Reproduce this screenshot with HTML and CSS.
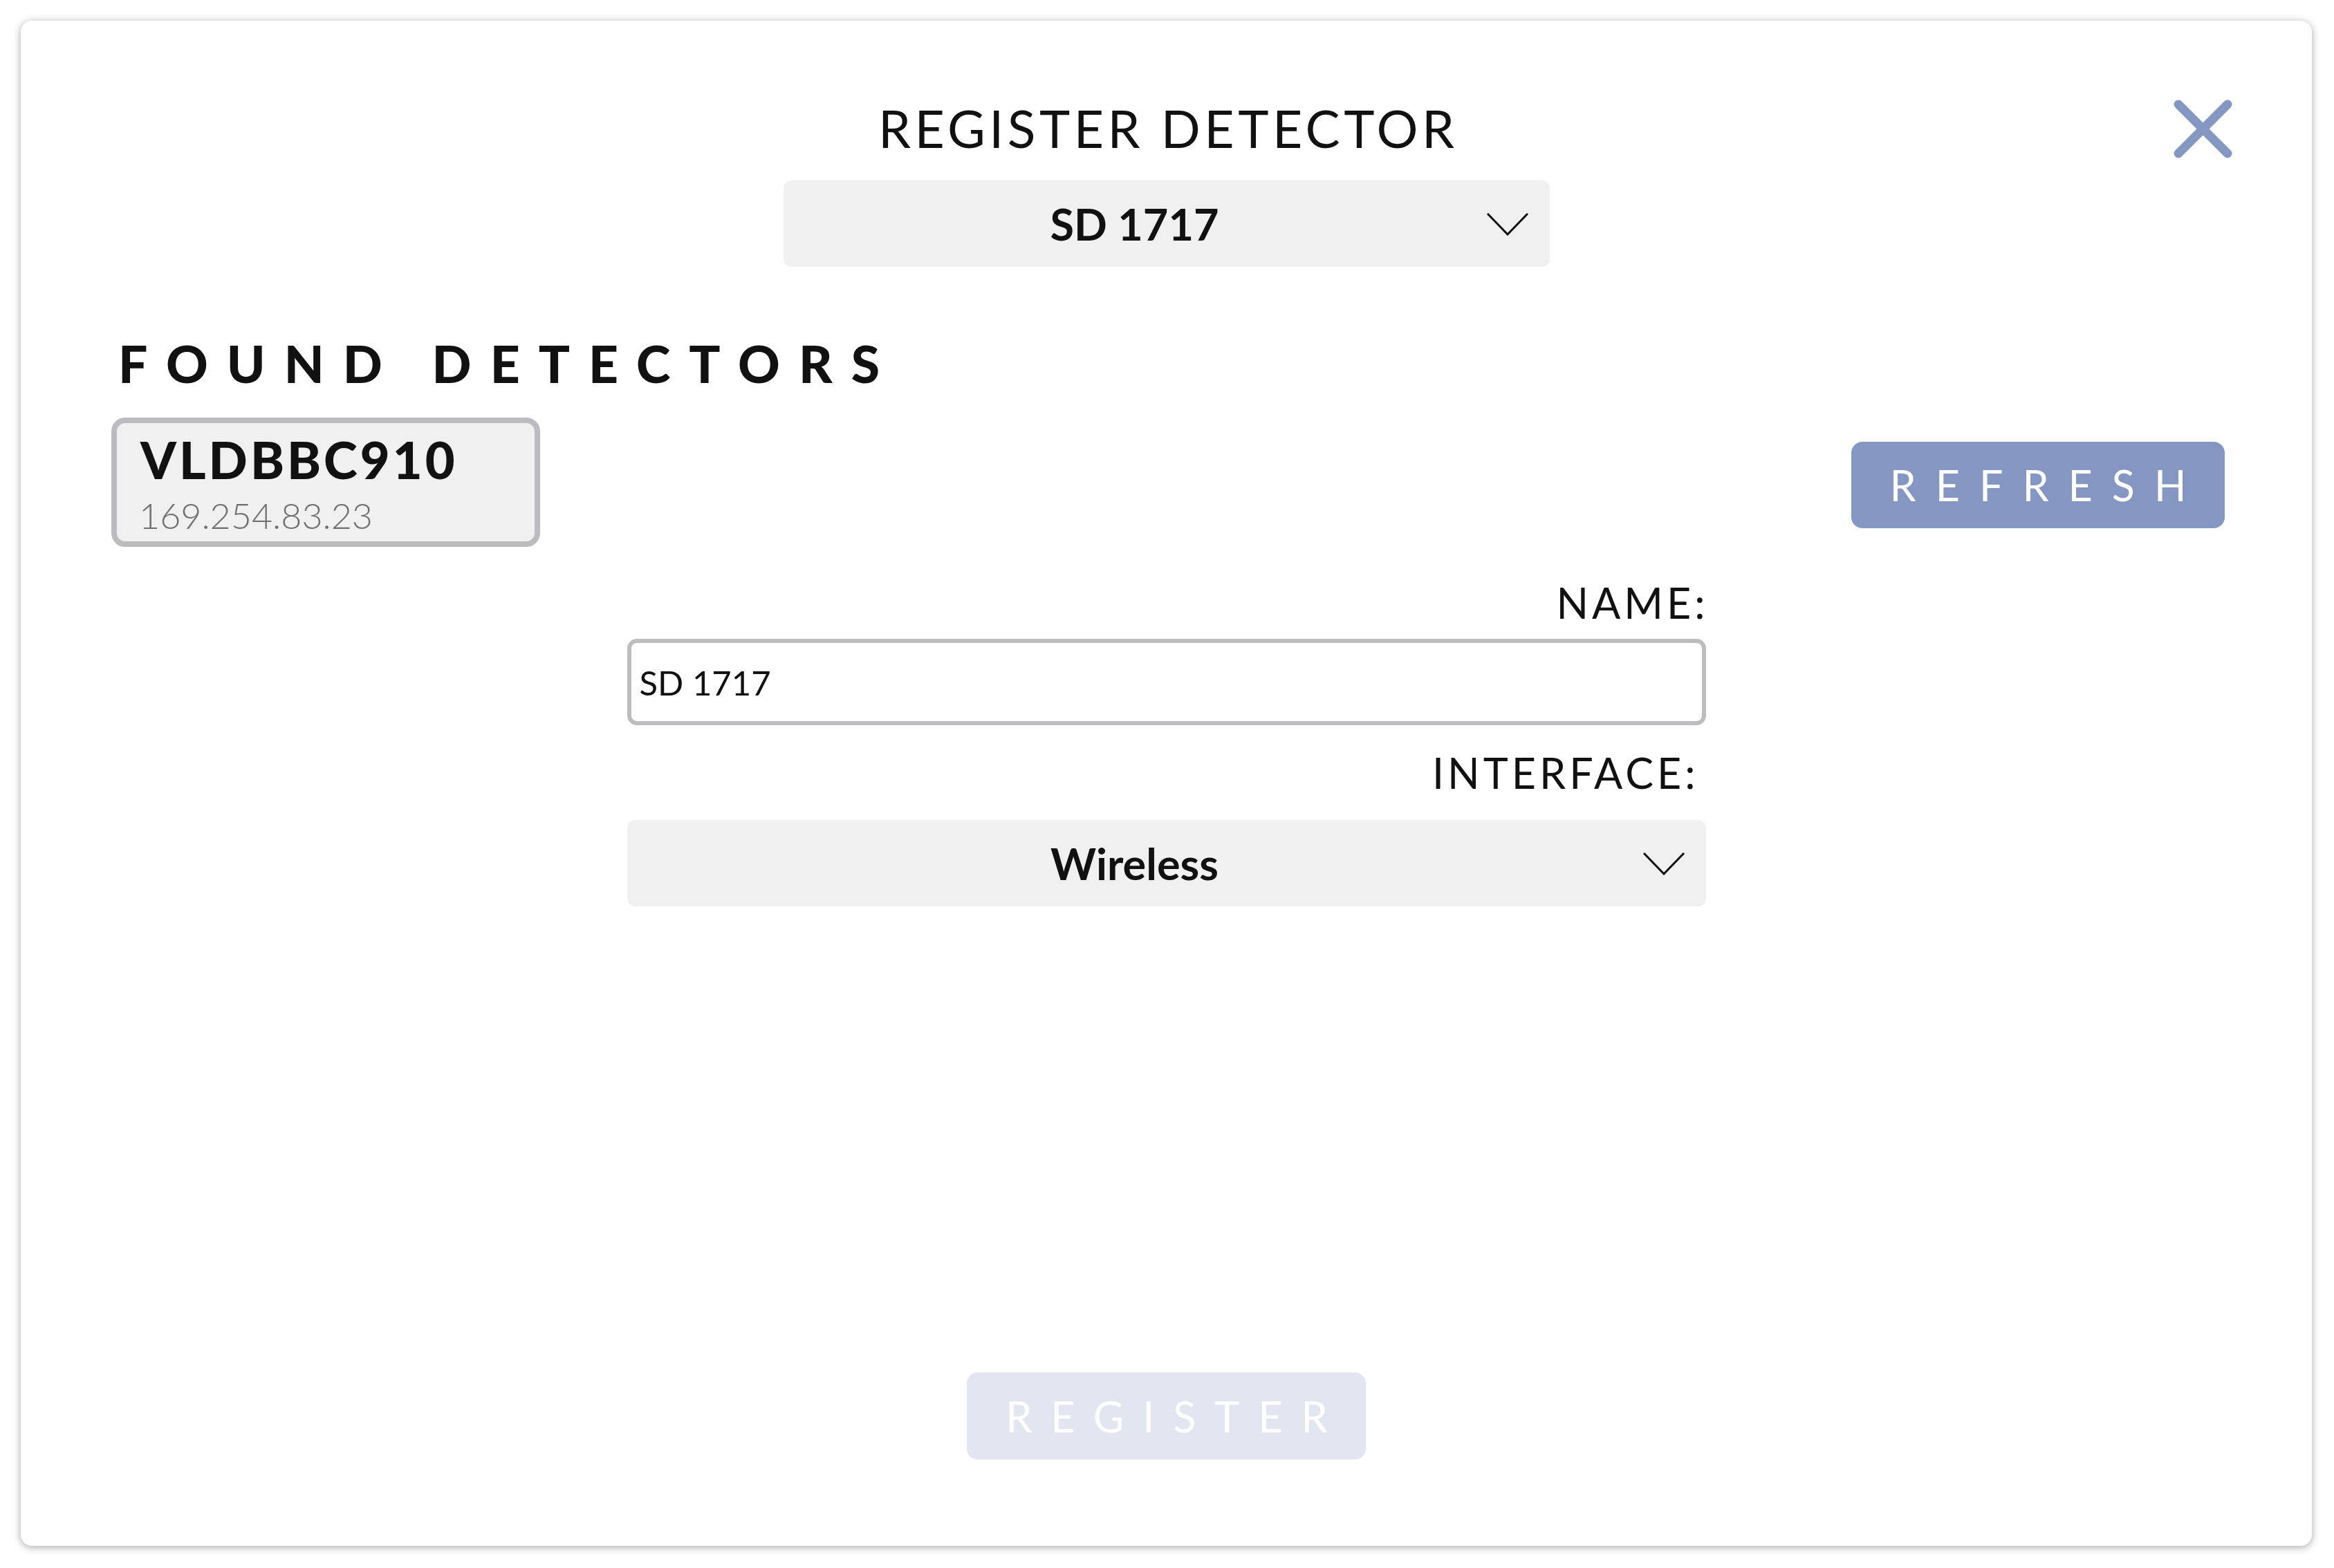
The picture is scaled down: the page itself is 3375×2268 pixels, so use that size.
FILE: index.html
```html
<!DOCTYPE html>
<html>
<head>
<meta charset="utf-8">
<link rel="stylesheet" href="styles.css">
</head>
<body>
<div class="modal">
  <button class="close" aria-label="Close">
    <svg width="85" height="85" viewBox="0 0 85 85"><line x1="7" y1="7" x2="78" y2="78"/><line x1="78" y1="7" x2="7" y2="78"/></svg>
  </button>
  <h1 class="title">REGISTER DETECTOR</h1>
  <div class="select select-top">
    <span class="select-text">SD 1717</span>
    <svg class="chev" width="62" height="34" viewBox="0 0 62 34"><polyline points="2,2 31,32 60,2"/></svg>
  </div>
  <h2 class="found">FOUND DETECTORS</h2>
  <div class="found-row">
    <div class="det-card">
      <div class="det-name">VLDBBC910</div>
      <div class="det-ip">169.254.83.23</div>
    </div>
    <button class="btn btn-refresh">REFRESH</button>
  </div>
  <div class="form">
    <label class="lbl lbl-name">NAME:</label>
    <div class="input">SD 1717</div>
    <label class="lbl lbl-iface">INTERFACE:</label>
    <div class="select select-iface">
      <span class="select-text">Wireless</span>
      <svg class="chev" width="62" height="34" viewBox="0 0 62 34"><polyline points="2,2 31,32 60,2"/></svg>
    </div>
  </div>
  <button class="btn btn-register">REGISTER</button>
</div>
</body>
</html>
```
FILE: styles.css
```css
html, body {
  margin: 0;
  padding: 0;
  background: #ffffff;
}
body {
  width: 3375px;
  height: 2268px;
  font-family: "Lato", "Open Sans", sans-serif;
  color: #111;
  overflow: hidden;
}
.modal {
  position: relative;
  box-sizing: border-box;
  margin: 30px 0 0 30px;
  width: 3313px;
  height: 2206px;
  background: #fff;
  border-radius: 16px;
  box-shadow: 0 2px 12px rgba(0,0,0,0.35);
  display: flex;
  flex-direction: column;
  padding-top: 118px;
}
.close {
  position: absolute;
  top: 114px;
  right: 115px;
  padding: 0;
  margin: 0;
  border: 0;
  background: none;
  line-height: 0;
}
.close line {
  stroke: #8497c2;
  stroke-width: 13;
  stroke-linecap: round;
}
.title {
  margin: 0;
  font-size: 75px;
  line-height: 75px;
  font-weight: 400;
  text-align: center;
  letter-spacing: 5.5px;
  padding-left: 5.5px;
}
.select {
  box-sizing: border-box;
  background: #f0f0f0;
  border-radius: 12px;
  height: 125px;
  display: flex;
  align-items: center;
  padding-right: 30px;
}
.select-top {
  width: 1108px;
  margin: 38px auto 0;
}
.select-text {
  flex: 1;
  text-align: center;
  font-weight: 700;
  font-size: 63px;
  line-height: 63px;
}
.chev polyline {
  fill: none;
  stroke: #111;
  stroke-width: 3;
}
.found {
  margin: 102px 0 0 141px;
  font-size: 75px;
  line-height: 75px;
  font-weight: 900;
  letter-spacing: 27px;
}
.found-row {
  display: flex;
  justify-content: space-between;
  align-items: flex-start;
  margin-top: 41px;
  padding: 0 126px 0 131px;
}
.det-card {
  box-sizing: border-box;
  width: 620px;
  height: 187px;
  border: 8px solid #bcbcc0;
  border-radius: 20px;
  background: #f0f0f0;
  padding: 16px 0 0 34px;
}
.det-name {
  font-weight: 900;
  font-size: 74px;
  line-height: 74px;
  letter-spacing: 4px;
}
.det-ip {
  margin-top: 17px;
  font-weight: 300;
  font-size: 52px;
  line-height: 52px;
  color: #6f6f6f;
  margin-left: -2px;
}
.btn {
  box-sizing: border-box;
  border: 0;
  border-radius: 16px;
  color: #fff;
  font-family: "Lato", "Open Sans", sans-serif;
  font-weight: 400;
  font-size: 61px;
  letter-spacing: 28px;
  padding: 0 0 0 28px;
  text-align: center;
}
.btn-refresh {
  width: 540px;
  height: 125px;
  margin-top: 35px;
  background: #8497c2;
}
.form {
  width: 1560px;
  margin: 51px auto 0;
  display: flex;
  flex-direction: column;
}
.lbl {
  display: block;
  text-align: right;
  font-size: 61px;
  line-height: 60px;
  font-weight: 400;
  letter-spacing: 5px;
}
.lbl-name {
  padding-right: 0;
  margin-right: -4px;
}
.lbl-iface {
  margin-top: 39px;
  padding-right: 10px;
}
.input {
  box-sizing: border-box;
  margin-top: 22px;
  height: 125px;
  border: 6px solid #bdbdc0;
  border-radius: 14px;
  background: #fff;
  display: flex;
  align-items: center;
  padding-left: 12px;
  font-size: 49px;
  line-height: 50px;
}
.select-iface {
  margin-top: 38px;
}
.btn-register {
  width: 577px;
  height: 126px;
  margin: auto auto 125px;
  background: #e2e6f0;
  letter-spacing: 27px;
}
```
